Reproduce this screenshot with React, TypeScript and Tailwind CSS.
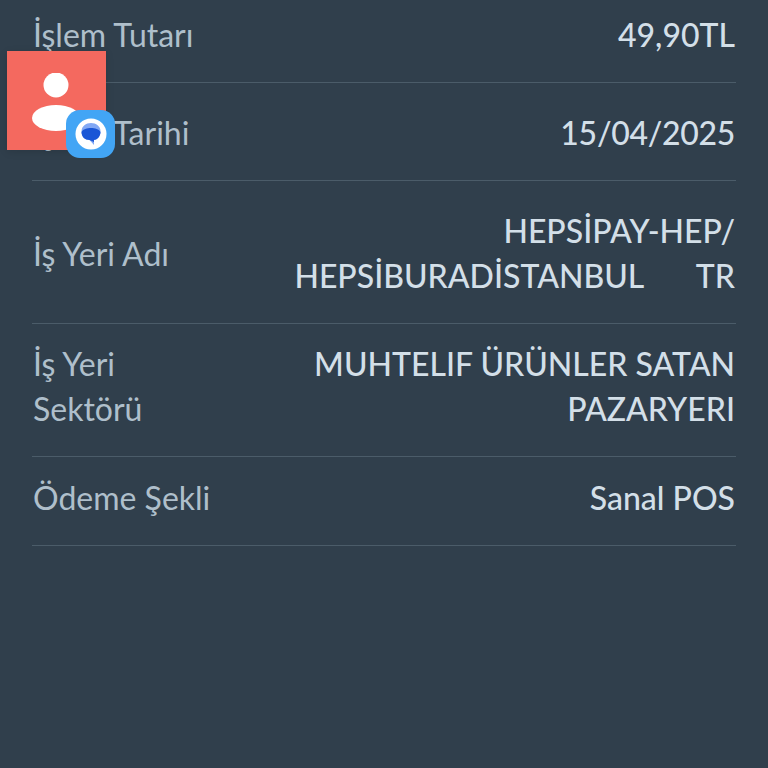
const rows = [
  { label: "İşlem Tutarı", value: ["49,90TL"], pad: "pt-[12px] pb-[25px]", valueClass: "" },
  { label: "İşlem Tarihi", value: ["15/04/2025"], pad: "pt-[27px] pb-[25px]", valueClass: "tracking-[-0.3px]" },
  { label: "İş Yeri Adı", value: ["HEPSİPAY-HEP/", "HEPSİBURADİSTANBUL\u00a0\u00a0\u00a0\u00a0\u00a0\u00a0\u2009TR"], pad: "pt-[27px] pb-[25px]", valueClass: "" },
  { label: "İş Yeri Sektörü", value: ["MUHTELIF ÜRÜNLER SATAN", "PAZARYERI"], pad: "pt-[17px] pb-[25px]", valueClass: "" },
  { label: "Ödeme Şekli", value: ["Sanal POS"], pad: "pt-[18px] pb-[25px]", valueClass: "" },
];

const App = () => {
  return (
    <div className="relative h-[768px] w-[768px] overflow-hidden bg-[#303f4c] font-['Lato',sans-serif] text-[32px] leading-[45px] text-[#d3dfe8]">
      <div className="flex flex-col pl-[32px] pr-[32px]">
        {rows.map((row) => (
          <div key={row.label} className={`flex items-center justify-between border-b border-[#4b5c69] ${row.pad}`}>
            <div className="w-[190px] pl-[1px] text-[32px] text-[#afbfcb]">{row.label}</div>
            <div className={`pr-[1px] text-right font-medium whitespace-nowrap ${row.valueClass}`}>
              {row.value.map((line) => (
                <div key={line}>{line}</div>
              ))}
            </div>
          </div>
        ))}
      </div>

      {/* notification bubble on top of the list */}
      <div className="absolute left-[7px] top-[51px] flex h-[99px] w-[99px] items-start justify-center bg-[#f4695f] shadow-[0_2px_8px_rgba(0,0,0,0.12)]">
        <svg width="56" height="60" viewBox="0 0 56 60" className="mt-[22px] ml-[-1px]">
          <circle cx="28" cy="12" r="12.5" fill="#fff" />
          <ellipse cx="28" cy="45" rx="24" ry="13" fill="#fff" />
        </svg>
      </div>
      <div className="absolute left-[66px] top-[110px] flex h-[48px] w-[49px] items-center justify-center rounded-[14px] bg-[#42a5f5]">
        <svg width="32" height="32" viewBox="0 0 32 32">
          <circle cx="16" cy="16" r="15.5" fill="#fff" />
          <path d="M6.5 13.5 C6.5 8 11 5 16 5 C21 5 25.5 8 25.5 13.5 C25.5 19 21.5 22 19 22 L19 27 L14.5 22 C10 22 6.5 19 6.5 13.5 Z" fill="#82a8f4" />
          <path d="M6.5 14 C8 11 12 10 16 10 C20 10 24 11 25.5 14 C25.5 19 21.5 22 19 22 L19 24 L14.5 22 C10 22 6.5 19 6.5 14 Z" fill="#1a56d6" />
        </svg>
      </div>
    </div>
  );
};

export default App;
